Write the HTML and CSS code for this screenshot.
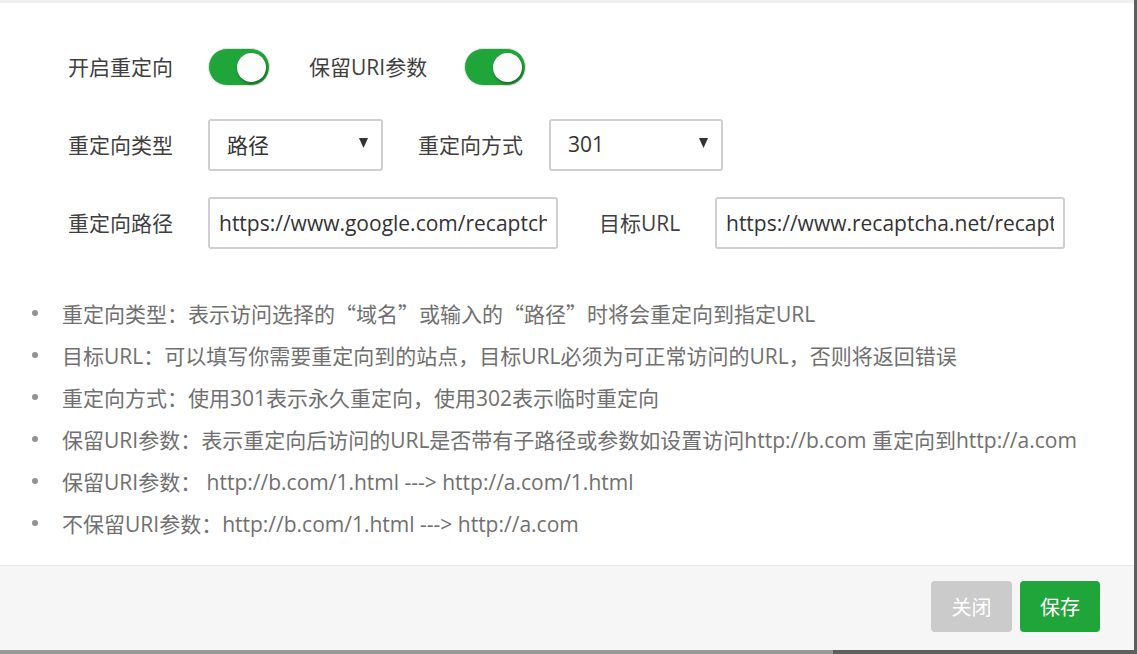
FILE: index.html
```html
<!DOCTYPE html>
<html lang="zh-CN">
<head>
<meta charset="utf-8">
<title>重定向设置</title>
<link rel="stylesheet" href="styles.css">
</head>
<body>
<div class="screen">
  <div class="modal">
    <div class="modal-top"></div>
    <div class="modal-body">
      <div class="form">
        <div class="row">
          <span class="label label-first">开启重定向</span>
          <span class="switch"><span class="knob"></span></span>
          <span class="label label-r1">保留URI参数</span>
          <span class="switch"><span class="knob"></span></span>
        </div>
        <div class="row">
          <span class="label label-first">重定向类型</span>
          <div class="select select-a"><span>路径</span><svg class="arrow" width="9" height="10" viewBox="0 0 9 10"><polygon points="0,0 9,0 4.5,10" fill="#333"/></svg></div>
          <span class="label label-r2">重定向方式</span>
          <div class="select select-b"><span>301</span><svg class="arrow" width="9" height="10" viewBox="0 0 9 10"><polygon points="0,0 9,0 4.5,10" fill="#333"/></svg></div>
        </div>
        <div class="row">
          <span class="label label-first">重定向路径</span>
          <input class="text-input" type="text" value="https://www.google.com/recaptcha/">
          <span class="label label-r3">目标URL</span>
          <input class="text-input" type="text" value="https://www.recaptcha.net/recaptcha/">
        </div>
      </div>
      <ul class="tips">
        <li>重定向类型：表示访问选择的<span class="q">“</span>域名<span class="q">”</span>或输入的<span class="q">“</span>路径<span class="q">”</span>时将会重定向到指定URL</li>
        <li>目标URL：可以填写你需要重定向到的站点，目标URL必须为可正常访问的URL，否则将返回错误</li>
        <li>重定向方式：使用301表示永久重定向，使用302表示临时重定向</li>
        <li>保留URI参数：表示重定向后访问的URL是否带有子路径或参数如设置访问http://b.com 重定向到http://a.com</li>
        <li>保留URI参数：&nbsp;http://b.com/1.html ---&gt; http://a.com/1.html</li>
        <li>不保留URI参数：http://b.com/1.html ---&gt; http://a.com</li>
      </ul>
    </div>
    <div class="modal-footer">
      <button class="btn btn-close" type="button">关闭</button>
      <button class="btn btn-save" type="button">保存</button>
    </div>
  </div>
  <div class="edge-right"></div>
  <div class="edge-bottom-left"></div>
  <div class="edge-bottom-right"></div>
</div>
</body>
</html>
```
FILE: styles.css
```css
* { box-sizing: border-box; }

html, body {
  margin: 0;
  padding: 0;
  background: #5f5f5f;
}

body {
  font-family: "Open Sans", "Noto Sans CJK SC", sans-serif;
  font-size: 21px;
  color: #444;
}

.screen {
  display: grid;
  grid-template-columns: 833px 301px 3px;
  grid-template-rows: 650px 4px;
  width: 1137px;
  height: 654px;
}

.modal {
  grid-column: 1 / 3;
  grid-row: 1;
  display: flex;
  flex-direction: column;
  background: #fff;
}

.edge-right {
  grid-column: 3;
  grid-row: 1 / 3;
  background: #5f5f5f;
}

.edge-bottom-left {
  grid-column: 1;
  grid-row: 2;
  background: #999;
}

.edge-bottom-right {
  grid-column: 2;
  grid-row: 2;
  background: #5f5f5f;
}

.modal-top {
  height: 3px;
  background: #efefef;
}

.modal-body {
  flex: 1;
  padding-top: 38px;
}

.form {
  padding-left: 68px;
}

.row {
  display: flex;
  align-items: center;
  height: 52px;
  margin-bottom: 26px;
}

.label {
  white-space: nowrap;
  color: #3f3f3f;
  line-height: 1;
}

.label-first { width: 140px; }
.label-r1 { margin-left: 39px; width: 155px; }
.label-r2 { margin-left: 35px; width: 131px; }
.label-r3 { margin-left: 41px; width: 116px; }

.switch {
  display: flex;
  justify-content: flex-end;
  align-items: center;
  width: 62px;
  height: 38px;
  padding: 0 3px;
  border-radius: 19px;
  background: #20a53a;
  border: 1px solid #e2e2e2;
}

.knob {
  width: 29px;
  height: 29px;
  border-radius: 50%;
  background: #fdfdfd;
  box-shadow: 1px 2px 3px rgba(0, 0, 0, 0.35);
}

.select {
  display: flex;
  align-items: center;
  justify-content: space-between;
  height: 52px;
  padding: 0 13px 2px 17px;
  border: 2px solid #cfcfcf;
  border-radius: 3px;
  background: #fff;
  color: #333;
}

.select-a { width: 175px; }
.select-b { width: 174px; }

.arrow { margin-top: -2px; }

.text-input {
  width: 350px;
  height: 52px;
  padding: 0 9px;
  border: 2px solid #cfcfcf;
  border-radius: 3px;
  font: inherit;
  color: #333;
  background: #fff;
  outline: none;
}

.tips {
  list-style: none;
  margin: 43px 0 0;
  padding: 0;
  color: #707070;
}

.tips li {
  display: flex;
  align-items: center;
  height: 42px;
  white-space: nowrap;
}

.tips li::before {
  content: "";
  width: 6px;
  height: 6px;
  border-radius: 50%;
  background: #929292;
  margin-left: 32px;
  margin-right: 24px;
  flex: none;
}

.q {
  font-family: "Noto Sans CJK SC", sans-serif;
  display: inline-block;
  width: 1em;
  text-align: center;
}

.modal-footer {
  height: 85px;
  display: flex;
  justify-content: flex-end;
  align-items: flex-start;
  gap: 8px;
  padding: 15px 34px 0 0;
  background: #f5f6f5;
  border-top: 1px solid #e7e9e8;
}

.btn {
  height: 51px;
  border: none;
  border-radius: 4px;
  color: #fff;
  font: inherit;
  font-size: 20px;
  padding: 0;
}

.btn-close { width: 81px; background: #cbcbcb; }
.btn-save { width: 80px; background: #20a53a; }
```
